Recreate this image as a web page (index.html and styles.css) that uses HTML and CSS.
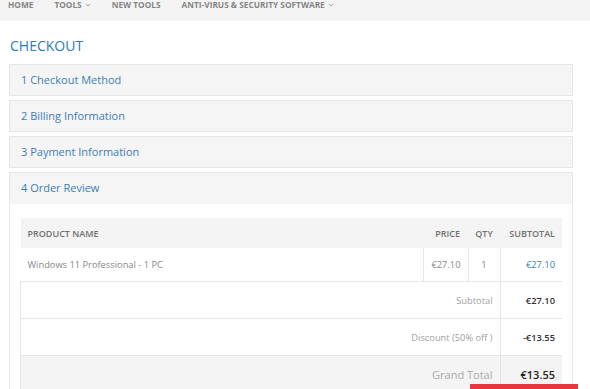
FILE: index.html
```html
<!DOCTYPE html>
<html lang="en">
<head>
  <meta charset="UTF-8" />
  <title>Checkout</title>
  <link rel="stylesheet" href="styles.css">
</head>
<body>
  <nav class="topnav">
    <a href="#">Home</a>
    <a href="#">Tools <svg class="caret" viewBox="0 0 8 5"><path d="M1 1l3 3 3-3" fill="none" stroke="currentColor" stroke-width="1.2"/></svg></a>
    <a href="#">New Tools</a>
    <a href="#">Anti-Virus &amp; Security Software <svg class="caret" viewBox="0 0 8 5"><path d="M1 1l3 3 3-3" fill="none" stroke="currentColor" stroke-width="1.2"/></svg></a>
  </nav>

  <div class="page">
    <h1 class="page-title">Checkout</h1>

    <div class="step"><div class="step-head">1 Checkout Method</div></div>
    <div class="step"><div class="step-head">2 Billing Information</div></div>
    <div class="step"><div class="step-head">3 Payment Information</div></div>
    <div class="step active">
      <div class="step-head">4 Order Review</div>
      <div class="step-body">
        <table class="review">
          <colgroup>
            <col>
            <col class="w-price">
            <col class="w-qty">
            <col class="w-sub">
          </colgroup>
          <thead>
            <tr>
              <th class="col-name">Product Name</th>
              <th class="col-price">Price</th>
              <th class="col-qty">Qty</th>
              <th class="col-sub">Subtotal</th>
            </tr>
          </thead>
          <tbody>
            <tr>
              <td class="col-name">Windows 11 Professional - 1 PC</td>
              <td class="col-price bl">&euro;27.10</td>
              <td class="col-qty bl">1</td>
              <td class="col-sub bl link">&euro;27.10</td>
            </tr>
          </tbody>
          <tfoot>
            <tr>
              <td colspan="3" class="label">Subtotal</td>
              <td class="amount">&euro;27.10</td>
            </tr>
            <tr>
              <td colspan="3" class="label">Discount (50% off )</td>
              <td class="amount">-&euro;13.55</td>
            </tr>
            <tr class="grand">
              <td colspan="3" class="label">Grand Total</td>
              <td class="amount">&euro;13.55</td>
            </tr>
          </tfoot>
        </table>
      </div>
    </div>
  </div>

  <button class="place-order">Place Order</button>
</body>
</html>
```

FILE: styles.css
```css
body {
  font-family: 'Open Sans', 'Liberation Sans', sans-serif;
  margin: 0;
  padding: 0;
  background-color: #fff;
  color: #777;
}
.topnav {
  background-color: #f4f4f4;
  height: 21px;
  display: flex;
  align-items: flex-start;
  gap: 21px;
  padding: 0 8px;
}
.topnav a {
  color: #858585;
  text-decoration: none;
  text-transform: uppercase;
  font-size: 8.3px;
  font-weight: 700;
  line-height: 1;
  padding-top: 1px;
  display: flex;
  align-items: center;
  gap: 3px;
}
.topnav .caret {
  width: 6px;
  height: 4px;
  color: #999;
}
.page {
  padding: 0 17px 0 9px;
}
.page-title {
  color: #2c7bb6;
  font-size: 14px;
  font-weight: 400;
  text-transform: uppercase;
  margin: 15px 0 8px 1px;
  line-height: 20px;
}
.step {
  border: 1px solid #e6e6e6;
  margin-bottom: 4px;
}
.step-head {
  background-color: #f5f5f5;
  color: #3a7db4;
  font-size: 11px;
  height: 30px;
  line-height: 30px;
  padding: 0 11px;
}
.step.active .step-head {
  height: 31px;
}
.step-body {
  background: #fff;
  padding: 14px 10px 0 10px;
}
.review {
  width: 100%;
  table-layout: fixed;
  border-collapse: collapse;
  font-size: 9.3px;
  color: #888;
}
.review .w-price {
  width: 45px;
}
.review .w-qty {
  width: 32px;
}
.review .w-sub {
  width: 62px;
}
.review thead th {
  background-color: #f4f4f4;
  color: #707070;
  font-weight: 600;
  text-transform: uppercase;
  height: 30px;
  padding: 0 7px;
  font-size: 9px;
}
.review .col-name {
  text-align: left;
}
.review .col-price {
  text-align: right;
}
.review .col-qty {
  text-align: center;
  padding: 0;
}
.review .col-sub {
  text-align: right;
}
.review thead th.col-price {
  padding-right: 8px;
}
.review thead th.col-qty {
  padding: 0;
}
.review tbody td {
  height: 33px;
  padding: 0 7px;
}
.review tbody td.col-qty {
  padding: 0;
}
.review td.bl {
  border-left: 1px solid #e6e6e6;
}
.review td.link {
  color: #3a7db4;
}
.review tfoot td {
  height: 36px;
  padding: 0 7px;
  border-top: 1px solid #e6e6e6;
}
.review tfoot td.label {
  text-align: right;
  border-left: 1px solid #e6e6e6;
  border-right: 1px solid #e6e6e6;
  color: #a0a0a0;
}
.review tfoot td.amount {
  text-align: right;
  color: #333;
  font-weight: 600;
  font-size: 9.3px;
}
.review tfoot .grand td {
  background-color: #f4f4f4;
}
.review tfoot .grand td.label {
  font-size: 11px;
  color: #aaa;
}
.review tfoot .grand td.amount {
  font-size: 11px;
  color: #222;
}
.place-order {
  position: fixed;
  left: 470px;
  top: 384px;
  background-color: #e8363f;
  color: white;
  border: none;
  width: 108px;
  height: 30px;
  font-size: 10px;
  font-family: inherit;
}
```
